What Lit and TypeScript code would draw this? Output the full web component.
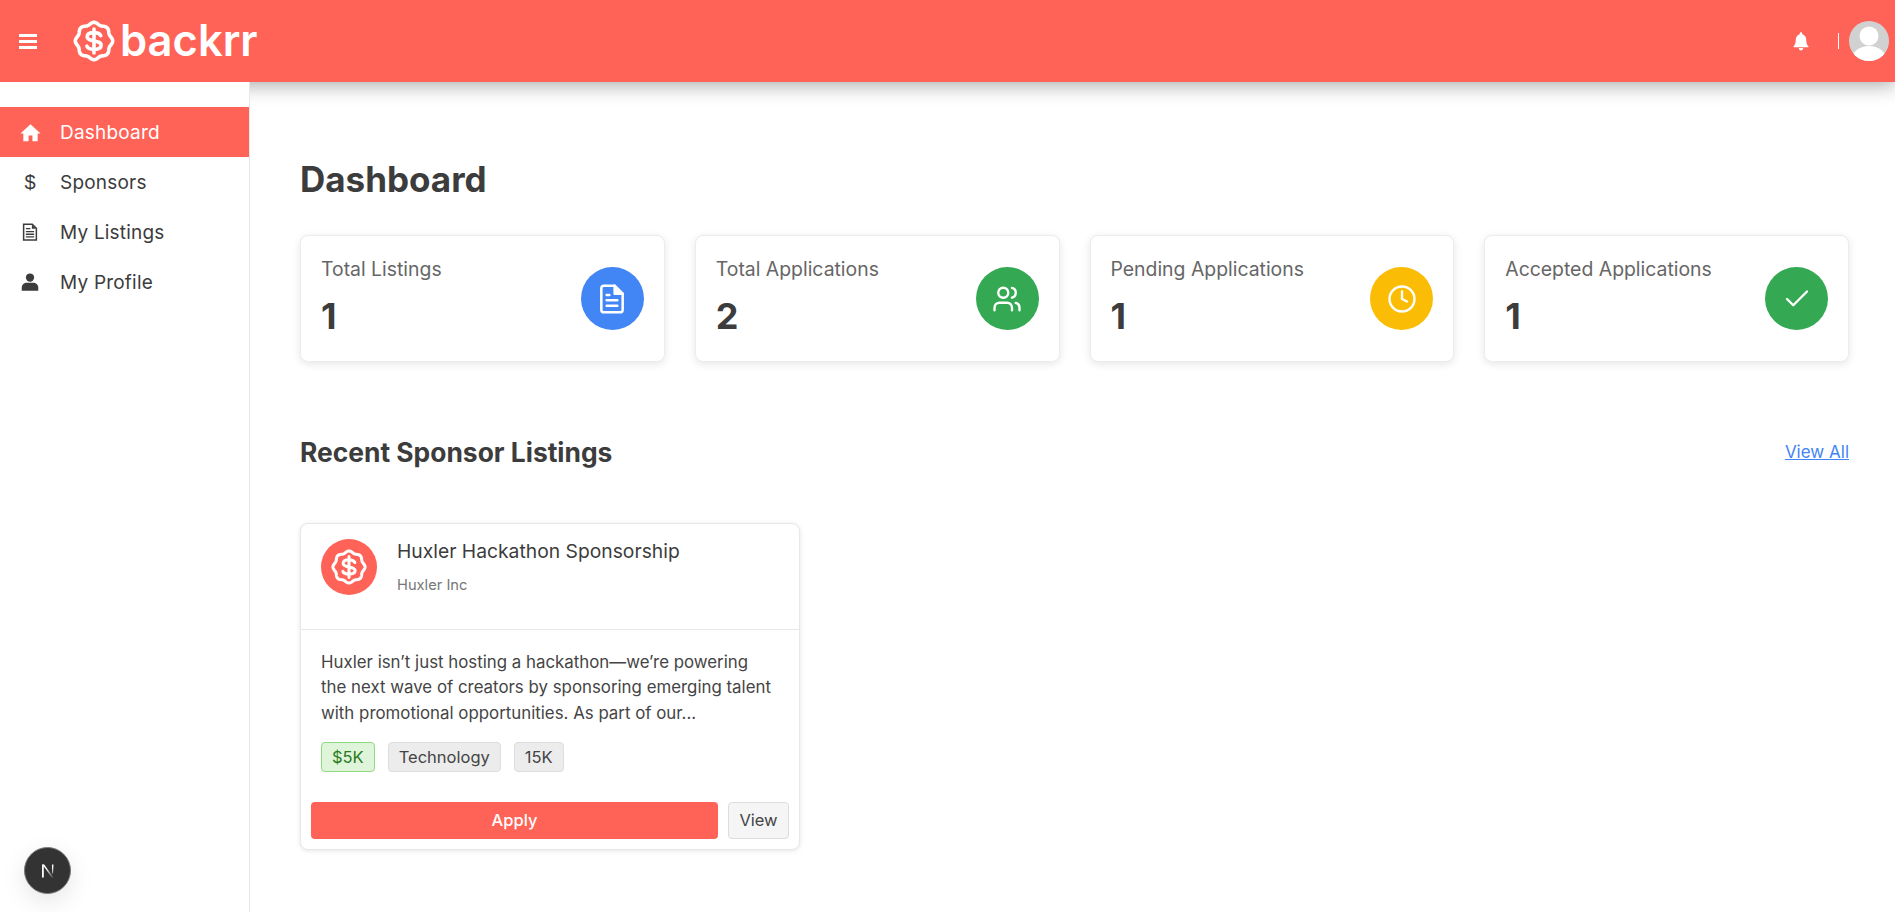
import { LitElement, html, css, svg } from "lit";
import { customElement } from "lit/decorators.js";

function scallop(cx: number, cy: number, r: number, amp: number, lobes: number): string {
  const pts: string[] = [];
  for (let i = 0; i < 160; i++) {
    const a = (i / 160) * Math.PI * 2;
    const rr = r + amp * Math.cos(lobes * a);
    pts.push(`${(cx + rr * Math.sin(a)).toFixed(2)} ${(cy - rr * Math.cos(a)).toFixed(2)}`);
  }
  return `M${pts.join("L")}Z`;
}
const scallopPath = scallop(20, 20, 16.800, 1, 8);

const logo = (size: number) => html`<svg class="logo" width=${size} height=${size} viewBox="0 0 40 40" fill="none" stroke="#fff" stroke-width="3.400" stroke-linecap="round" stroke-linejoin="round">
  <path d=${scallopPath}/>
  <path d="M26.500 15c-.9-1.900-3-3-6.500-3-4 0-6.500 1.500-6.500 4 0 5.300 13.300 2.500 13.300 8 0 2.500-2.800 4-6.800 4-3.700 0-6-1.100-6.800-3.100M20 8.500v23"/>
</svg>`;

const navIcons = {
  home: svg`<path d="M12 2.500 0.500 13h3.300v9h6v-6.500h4.400V22h6v-9h3.300L12 2.500z" fill="currentColor"/>`,
  doc: svg`<path d="M3.500 1.500h11.500l5.500 5.500v15.500H3.500z" fill="none" stroke="currentColor" stroke-width="2"/><path d="M6.500 7.500h6M6.500 11.500h11M6.500 15h11M6.500 18.500h11" stroke="currentColor" stroke-width="1.800"/><path d="M14.500 2v5.500h5.500" fill="currentColor"/>`,
  user: svg`<circle cx="12" cy="6" r="5.500" fill="currentColor"/><path d="M1 23.500v-4c0-4 3.500-6.500 6.500-6.500h9c3 0 6.500 2.500 6.500 6.500v4z" fill="currentColor"/>`,
};

@customElement("app-root")
export class AppRoot extends LitElement {
  static styles = css`
    :host { display: flex; flex-direction: column; height: 100vh; overflow: hidden; background: #fff;
      font-family: Inter, "Noto Sans", sans-serif; color: #3c3c3c; }
    * { box-sizing: border-box; }
    header { height: 82px; flex: none; background: #ff6257; display: flex; align-items: center; color: #fff;
      box-shadow: 0 4px 18px rgba(0,0,0,.32); position: relative; z-index: 1; padding: 0 6px 0 19px; }
    .burger { width: 18px; height: 15px; display: flex; flex-direction: column; justify-content: space-between; margin-right: 36px; }
    .burger i { display: block; height: 3px; background: #fff; }
    .brand { display: flex; align-items: center; gap: 5px; }
    .wordmark { font-size: 43.500px; font-weight: 600; line-height: 1; }
    .spacer { flex: 1; }
    .bell { display: block; margin-right: 28px; }
    .sep { width: 1px; height: 16px; background: #fff; margin-right: 10px; }
    .avatar { display: block; }
    .body { flex: 1; display: flex; min-height: 0; }
    aside { width: 250px; flex: none; background: #fff; border-right: 1px solid #e8e8e8; padding-top: 25px; position: relative; z-index: 2; }
    .nav { display: flex; align-items: center; height: 50px; padding-left: 21px; font-size: 19px; letter-spacing: .2px; color: #3c3c3c; }
    .nav.active { background: #ff6257; color: #fff; }
    .nav .ic { width: 18px; height: 18px; margin-right: 21px; display: flex; align-items: center; justify-content: center; font-size: 20px; letter-spacing: 0; font-family: "Liberation Sans", sans-serif; }
    .nav svg { display: block; flex: none; }
    main { flex: 1; padding: 77px 46px 0 50px; min-width: 0; }
    h1 { margin: 0; font-size: 35px; line-height: 40px; font-weight: 700; color: #3c3c3c; }
    .stats { display: grid; grid-template-columns: repeat(4, 1fr); gap: 30px; margin-top: 36px; }
    .stat { height: 127px; background: #fff; border-radius: 8px; border: 1px solid #ececec; box-shadow: 0 2px 8px rgba(0,0,0,.1);
      padding: 21px 20px 20px; display: flex; justify-content: space-between; align-items: center; }
    .stat .t { font-size: 19.400px; line-height: 24px; color: #666; }
    .stat .v { font-size: 36px; line-height: 44px; font-weight: 700; color: #3c3c3c; margin-top: 13px; }
    .stat .text { align-self: flex-start; }
    .circle { width: 63px; height: 63px; border-radius: 50%; display: flex; align-items: center; justify-content: center; margin-top: -1px; }
    .section { display: flex; justify-content: space-between; align-items: center; margin-top: 73px; height: 34px; }
    h2 { margin: 0; font-size: 26.400px; font-weight: 700; color: #3c3c3c; }
    .link { font-size: 17px; color: #4285f4; text-decoration: underline; }
    .card { width: 500px; margin-top: 54px; height: 327px; border: 1px solid #e8e8e8; border-radius: 8px; box-shadow: 0 1px 5px rgba(0,0,0,.1); background: #fff; }
    .top { height: 106px; border-bottom: 1px solid #e8e8e8; padding: 15px 20px; display: flex; gap: 20px; }
    .mono { width: 56px; height: 56px; background: #ff6257; border-radius: 50%; display: flex; align-items: center; justify-content: center; flex: none; }
    .title { font-size: 19.300px; line-height: 24px; margin-top: 0; color: #3c3c3c; }
    .sub { font-size: 14.700px; line-height: 20px; color: #777; margin-top: 12px; }
    .desc { padding: 20px 20px 0; font-size: 16.850px; line-height: 25.400px; color: #444; white-space: nowrap; }
    .tags { display: flex; gap: 13px; padding: 0 20px; margin-top: 16px; }
    .tag { height: 30px; padding: 0 10px; display: flex; align-items: center; font-size: 16.500px; border: 1px solid #ddd; background: #ececec; border-radius: 4px; color: #444; }
    .tag.g { background: #dff5da; border-color: #8fd983; color: #2a7a1e; }
    .actions { display: flex; gap: 10px; padding: 0 10px; margin-top: 30px; }
    .apply { flex: 1; height: 37px; background: #ff6257; color: #fff; border-radius: 4px; display: flex; align-items: center; justify-content: center; font-size: 16.500px; font-weight: 500; padding-bottom: 1px; }
    .view { width: 61px; height: 37px; background: #f5f5f5; border: 1px solid #ddd; border-radius: 4px; display: flex; align-items: center; justify-content: center; font-size: 16.500px; color: #444; padding-bottom: 1px; }
    .next { position: absolute; left: 24px; top: 847px; width: 47px; height: 47px; border-radius: 50%; background: #333; border: 1.500px solid #777; box-shadow: 0 8px 24px rgba(0,0,0,.1); z-index: 3;
      display: flex; align-items: center; justify-content: center; }
  `;

  private stat(t: string, v: string, color: string, icon: unknown) {
    return html`<div class="stat">
      <div class="text"><div class="t">${t}</div><div class="v">${v}</div></div>
      <div class="circle" style="background:${color}">${icon}</div>
    </div>`;
  }

  render() {
    const s = (c: unknown, size = 32) => html`<svg width=${size} height=${size} viewBox="0 0 24 24" fill="none" stroke="#fff" stroke-width="1.900" stroke-linecap="round" stroke-linejoin="round">${c}</svg>`;
    return html`
      <header>
        <div class="burger"><i></i><i></i><i></i></div>
        <div class="brand">${logo(42)}<span class="wordmark">backrr</span></div>
        <div class="spacer"></div>
        <svg class="bell" width="18" height="20" viewBox="0 0 24 24" preserveAspectRatio="none" fill="#fff"><path d="M12 1.500c-1 0-1.700.7-1.700 1.700v.6C7 4.500 5 7.200 5 10.500c0 5-1.500 6.500-3 8v1h20v-1c-1.500-1.500-3-3-3-8 0-3.300-2-6-5.300-6.700v-.6c0-1-.7-1.700-1.700-1.700z"/><path d="M9 20.500h6c0 1.700-1.300 3-3 3s-3-1.300-3-3z"/></svg>
        <div class="sep"></div>
        <svg class="avatar" width="40" height="40" viewBox="0 0 40 40"><defs><clipPath id="av"><circle cx="20" cy="20" r="20"/></clipPath></defs><circle cx="20" cy="20" r="20" fill="#d1d1d1"/><g clip-path="url(#av)" fill="#fff"><circle cx="20" cy="15" r="9.500"/><ellipse cx="20" cy="38" rx="17" ry="13"/></g></svg>
      </header>
      <div class="body">
        <aside>
          <div class="nav active"><span class="ic"><svg width="21" height="21" viewBox="0 0 24 24">${navIcons.home}</svg></span>Dashboard</div>
          <div class="nav"><span class="ic">$</span>Sponsors</div>
          <div class="nav"><span class="ic"><svg width="18" height="18" viewBox="0 0 24 24">${navIcons.doc}</svg></span>My Listings</div>
          <div class="nav"><span class="ic"><svg width="18" height="18" viewBox="0 0 24 24">${navIcons.user}</svg></span>My Profile</div>
        </aside>
        <main>
          <h1>Dashboard</h1>
          <div class="stats">
            ${this.stat("Total Listings", "1", "#4285f4", s(svg`<path d="M14 2H6a2 2 0 0 0-2 2v16a2 2 0 0 0 2 2h12a2 2 0 0 0 2-2V8z"/><path d="M14 2v6h6" fill="#fff"/><path d="M16 13H8M16 17H8M10 9H8"/>`))}
            ${this.stat("Total Applications", "2", "#34a853", s(svg`<path d="M16 21v-2a4 4 0 0 0-4-4H6a4 4 0 0 0-4 4v2"/><circle cx="9" cy="7" r="4"/><path d="M22 21v-2a4 4 0 0 0-3-3.870M16 3.130a4 4 0 0 1 0 7.750"/>`, 30))}
            ${this.stat("Pending Applications", "1", "#fbbc05", s(svg`<circle cx="12" cy="12" r="10"/><path d="M12 6v6l4 2"/>`, 30))}
            ${this.stat("Accepted Applications", "1", "#34a853", s(svg`<path d="M20 6 9 17l-5-5"/>`, 30))}
          </div>
          <div class="section"><h2>Recent Sponsor Listings</h2><span class="link">View All</span></div>
          <div class="card">
            <div class="top">
              <div class="mono">${logo(36)}</div>
              <div><div class="title">Huxler Hackathon Sponsorship</div><div class="sub">Huxler Inc</div></div>
            </div>
            <div class="desc">Huxler isn’t just hosting a hackathon—we’re powering<br>the next wave of creators by sponsoring emerging talent<br>with promotional opportunities. As part of our...</div>
            <div class="tags"><span class="tag g">$5K</span><span class="tag">Technology</span><span class="tag">15K</span></div>
            <div class="actions"><div class="apply">Apply</div><div class="view">View</div></div>
          </div>
        </main>
      </div>
      <div class="next"><svg width="20" height="20" viewBox="0 0 20 20"><defs><linearGradient id="ng" x1="0" y1="0" x2="1" y2="1"><stop offset="0.3" stop-color="#fff"/><stop offset="1" stop-color="#fff" stop-opacity="0"/></linearGradient></defs><path d="M4 3.500h1.800v13H4z" fill="#fff"/><path d="M4.500 3.500h1.700L16 17h-2z" fill="url(#ng)"/><path d="M14 3.500h1.600v9H14z" fill="url(#ng)"/></svg></div>
    `;
  }
}
